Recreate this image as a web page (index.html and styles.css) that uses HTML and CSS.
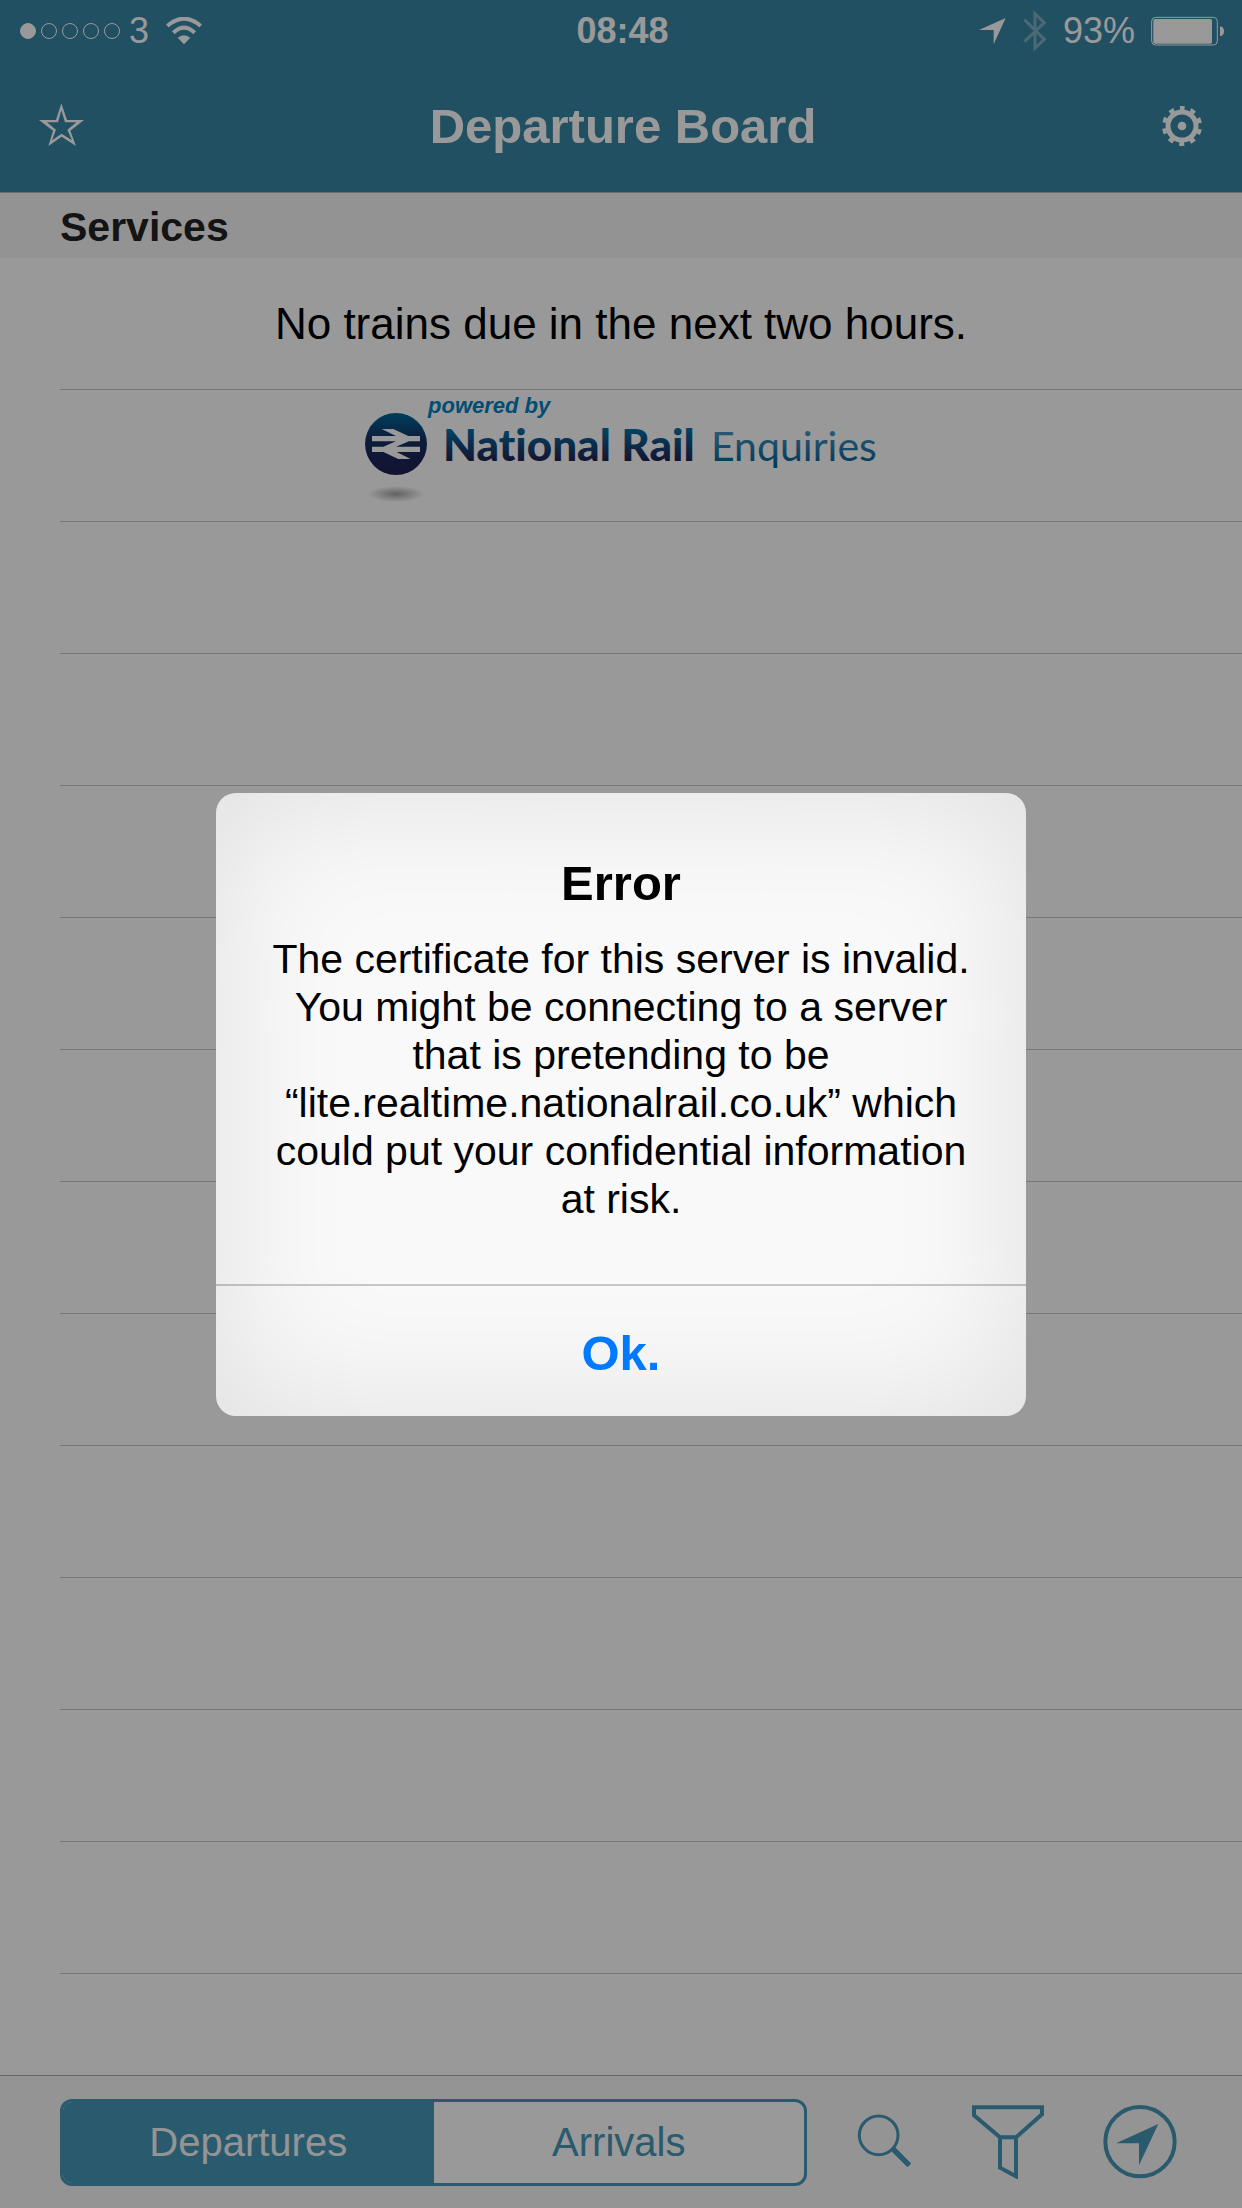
FILE: index.html
```html
<!DOCTYPE html>
<html lang="en">
<head>
<meta charset="utf-8">
<meta name="viewport" content="width=device-width, initial-scale=1">
<title>Departure Board</title>
<link rel="stylesheet" href="styles.css">
</head>
<body>
<div class="app">
  <header class="header">
    <div class="status">
      <div class="status-left">
        <span class="signal"><i class="dot dot-on"></i><i class="dot"></i><i class="dot"></i><i class="dot"></i><i class="dot"></i></span>
        <span>3</span>
        <svg class="wifi" width="36" height="28" viewBox="0 0 108 84" aria-hidden="true">
          <g fill="none" stroke="currentColor" stroke-width="12">
            <path d="M4 27Q54-17 104 27"/>
            <path d="M22 47Q54 17 86 47"/>
          </g>
          <path d="M35 62Q54 47 73 62L54 82Z" fill="currentColor"/>
        </svg>
      </div>
      <span class="clock">08:48</span>
      <div class="status-right">
        <svg width="28" height="28" viewBox="0 0 84 84" aria-hidden="true"><path d="M0 39L80 3L44 82V39Z" fill="currentColor"/></svg>
        <svg class="bluetooth" width="24" height="42" viewBox="0 0 72 126" aria-hidden="true"><path d="M4 29L64 88L36 115V11L64 38L4 95" fill="none" stroke="currentColor" stroke-width="9"/></svg>
        <span>93%</span>
        <svg class="battery" width="74" height="30" viewBox="0 0 222 90" aria-hidden="true">
          <rect x="2" y="4" width="197" height="83" rx="12" fill="none" stroke="currentColor" stroke-width="3"/>
          <rect x="7" y="9" width="176" height="74" rx="5" fill="currentColor"/>
          <path d="M207 31Q219 33 219 46T207 61Z" fill="currentColor"/>
        </svg>
      </div>
    </div>
    <nav class="nav">
      <button class="icon-button" type="button" aria-label="Favourites">
        <svg width="46" height="46" viewBox="0 0 138 138" aria-hidden="true"><path fill="currentColor" fill-rule="evenodd" d="M70 1L87 51H138L97 83L114 129L71 101L31 129L45 83L3 51H54ZM70 22L60 58H27L54 80L42 112L71 92L102 112L88 80L115 58H81Z"/></svg>
      </button>
      <h1 class="title">Departure Board</h1>
      <button class="icon-button" type="button" aria-label="Settings">
        <svg width="42" height="42" viewBox="0 0 126 126" aria-hidden="true">
          <circle cx="60" cy="63" r="42" fill="none" stroke="currentColor" stroke-width="15"/>
          <circle cx="60" cy="63" r="54" fill="none" stroke="currentColor" stroke-width="12" pathLength="100" stroke-dasharray="4.6 5.4" stroke-dashoffset="2.3" transform="rotate(-90 60 63)"/>
          <circle cx="60" cy="63" r="13" fill="currentColor"/>
        </svg>
      </button>
    </nav>
  </header>

  <main class="board">
    <h2 class="section-title">Services</h2>
    <ul class="rows">
      <li class="row">No trains due in the next two hours.</li>
      <li class="row">
        <svg class="logo" width="520" height="131" viewBox="0 0 520 131" role="img" aria-label="powered by National Rail Enquiries">
          <defs>
            <linearGradient id="ball" x1="0" y1="0" x2="0" y2="1"><stop offset="0" stop-color="#006898"/><stop offset=".45" stop-color="#152f62"/><stop offset="1" stop-color="#201f52"/></linearGradient>
            <linearGradient id="bold" gradientUnits="userSpaceOnUse" x1="0" y1="36" x2="0" y2="72"><stop offset="0" stop-color="#0078b0"/><stop offset="1" stop-color="#22204f"/></linearGradient>
            <linearGradient id="light" gradientUnits="userSpaceOnUse" x1="0" y1="36" x2="0" y2="76"><stop offset="0" stop-color="#559cc4"/><stop offset="1" stop-color="#006098"/></linearGradient>
            <radialGradient id="shade"><stop offset="0" stop-color="#000" stop-opacity=".36"/><stop offset="1" stop-color="#000" stop-opacity="0"/></radialGradient>
          </defs>
          <ellipse cx="35" cy="104" rx="28" ry="8" fill="url(#shade)"/>
          <circle cx="35" cy="54" r="31" fill="url(#ball)"/>
          <path transform="translate(-21 -10) scale(.3333)" fill="#fff" d="M96 168H168L125 147H160L205 168H240V184H207L168 200H240V216H170L212 237H175L130 216H96V200H130L168 184H96Z"/>
          <text class="logo-small" x="67" y="23">powered by</text>
          <text class="logo-bold" x="82" y="71" fill="url(#bold)">National Rail</text>
          <text class="logo-light" x="350" y="71" fill="url(#light)">Enquiries</text>
        </svg>
      </li>
      <li class="row"></li>
      <li class="row"></li>
      <li class="row"></li>
      <li class="row"></li>
      <li class="row"></li>
      <li class="row"></li>
      <li class="row"></li>
      <li class="row"></li>
      <li class="row"></li>
      <li class="row"></li>
      <li class="row"></li>
    </ul>
  </main>

  <footer class="toolbar">
    <div class="segmented" role="group" aria-label="Board type">
      <button class="segment segment-on" type="button" aria-pressed="true">Departures</button>
      <button class="segment" type="button" aria-pressed="false">Arrivals</button>
    </div>
    <button class="icon-button" type="button" aria-label="Search">
      <svg width="68" height="74" viewBox="0 0 204 222" aria-hidden="true"><g fill="none" stroke="currentColor"><circle cx="71" cy="91" r="58" stroke-width="9"/><path d="M114 132L163 181" stroke-width="16"/></g></svg>
    </button>
    <button class="icon-button" type="button" aria-label="Filter">
      <svg width="84" height="74" viewBox="0 0 252 222" aria-hidden="true"><path d="M9 7H213V28L135 97H87L9 31ZM87 97V188L135 214V97" fill="none" stroke="currentColor" stroke-width="12"/></svg>
    </button>
    <button class="icon-button" type="button" aria-label="Nearby stations">
      <svg width="74" height="74" viewBox="0 0 222 222" aria-hidden="true"><circle cx="111" cy="110" r="104" fill="none" stroke="currentColor" stroke-width="12"/><path d="M39 115L166 57L108 181V115Z" fill="currentColor"/></svg>
    </button>
  </footer>
</div>

<div class="backdrop">
  <div class="alert" role="alertdialog" aria-modal="true" aria-labelledby="alert-title" aria-describedby="alert-text">
    <div class="alert-body">
      <h2 class="alert-title" id="alert-title">Error</h2>
      <p class="alert-text" id="alert-text">The certificate for this server is invalid. You might be connecting to a server that is pretending to be “lite.realtime.nationalrail.co.uk” which could put your confidential information at risk.</p>
    </div>
    <button class="alert-button" type="button">Ok.</button>
  </div>
</div>
</body>
</html>
```
FILE: styles.css
```css
* {
  box-sizing: border-box;
}

body {
  margin: 0;
  background: #fff;
  color: #000;
  font-family: "Liberation Sans", Arial, sans-serif;
}

h1, h2, p, ul {
  margin: 0;
  padding: 0;
}

button {
  margin: 0;
  padding: 0;
  border: 0;
  background: none;
  color: inherit;
  font: inherit;
  cursor: pointer;
}

svg {
  display: block;
}

.app {
  display: flex;
  flex-direction: column;
  height: 100vh;
}

/* Status and navigation bars */
.header {
  flex: none;
  border-bottom: 1px solid #b2b2b2;
  background: #3785a5;
  color: #fff;
}

.status {
  display: grid;
  grid-template-columns: 1fr auto 1fr;
  align-items: center;
  height: 60px;
  padding: 2px 17px 0 20px;
  font-size: 36px;
}

.status-left,
.status-right {
  display: flex;
  align-items: center;
}

.status-left {
  gap: 9px;
}

.status-right {
  justify-content: flex-end;
  gap: 16px;
}

.signal {
  display: flex;
  gap: 5px;
}

.dot {
  width: 16px;
  height: 16px;
  border: 1px solid #fff;
  border-radius: 50%;
}

.dot-on {
  background: #fff;
}

.wifi {
  margin-left: 8px;
}

.clock {
  font-weight: bold;
}

.bluetooth {
  opacity: 0.35;
}

.nav {
  display: flex;
  align-items: center;
  justify-content: space-between;
  height: 132px;
  padding: 0 38px;
}

.title {
  font-size: 49px;
}

.icon-button {
  flex: none;
}

/* Services list */
.board {
  flex: 1;
  min-height: 0;
  overflow: hidden;
}

.section-title {
  height: 65px;
  padding-left: 60px;
  background: #f5f5f5;
  color: #222;
  font-size: 41px;
  line-height: 68px;
}

.rows {
  list-style: none;
}

.row {
  display: flex;
  align-items: center;
  justify-content: center;
  height: 132px;
  margin-left: 60px;
  padding-right: 60px;
  border-bottom: 1px solid #c8c7cc;
  font-size: 44px;
}

.logo {
  overflow: visible;
}

.logo-small {
  fill: #0080c4;
  font-size: 22px;
  font-style: italic;
  font-weight: bold;
}

.logo-bold,
.logo-light {
  font-family: Lato, sans-serif;
  font-variant-ligatures: none;
}

.logo-bold {
  font-size: 44px;
  font-weight: 900;
}

.logo-light {
  font-size: 41px;
}

/* Bottom toolbar */
.toolbar {
  display: flex;
  flex: none;
  align-items: center;
  gap: 48px;
  height: 133px;
  padding: 0 65px 0 60px;
  border-top: 1px solid #acacac;
  background: #f7f7f7;
  color: #4696b6;
}

.segmented {
  display: flex;
  flex: 1;
  height: 87px;
  overflow: hidden;
  border: 3px solid #4696b6;
  border-radius: 12px;
  background: #fff;
  font-size: 40px;
}

.segment {
  flex: 1;
}

.segment-on {
  background: #4696b6;
  color: #f7f7f7;
}

/* Alert */
.backdrop {
  position: fixed;
  inset: 0;
  display: flex;
  align-items: center;
  justify-content: center;
  padding: 24px;
  background: rgba(0, 0, 0, 0.4);
}

.alert {
  width: 100%;
  max-width: 810px;
  border-radius: 20px;
  background: #f9f9fa;
  box-shadow: inset 0 0 140px rgba(0, 0, 0, 0.11);
  text-align: center;
}

.alert-body {
  padding: 60px 50px 61px;
}

.alert-title {
  margin-bottom: 22px;
  font-size: 49px;
  line-height: 60px;
}

.alert-text {
  font-size: 41px;
  line-height: 48px;
}

.alert-button {
  width: 100%;
  height: 132px;
  padding-top: 4px;
  border-top: 2px solid rgba(0, 0, 0, 0.2);
  color: #007aff;
  font-size: 49px;
  font-weight: bold;
}
```
